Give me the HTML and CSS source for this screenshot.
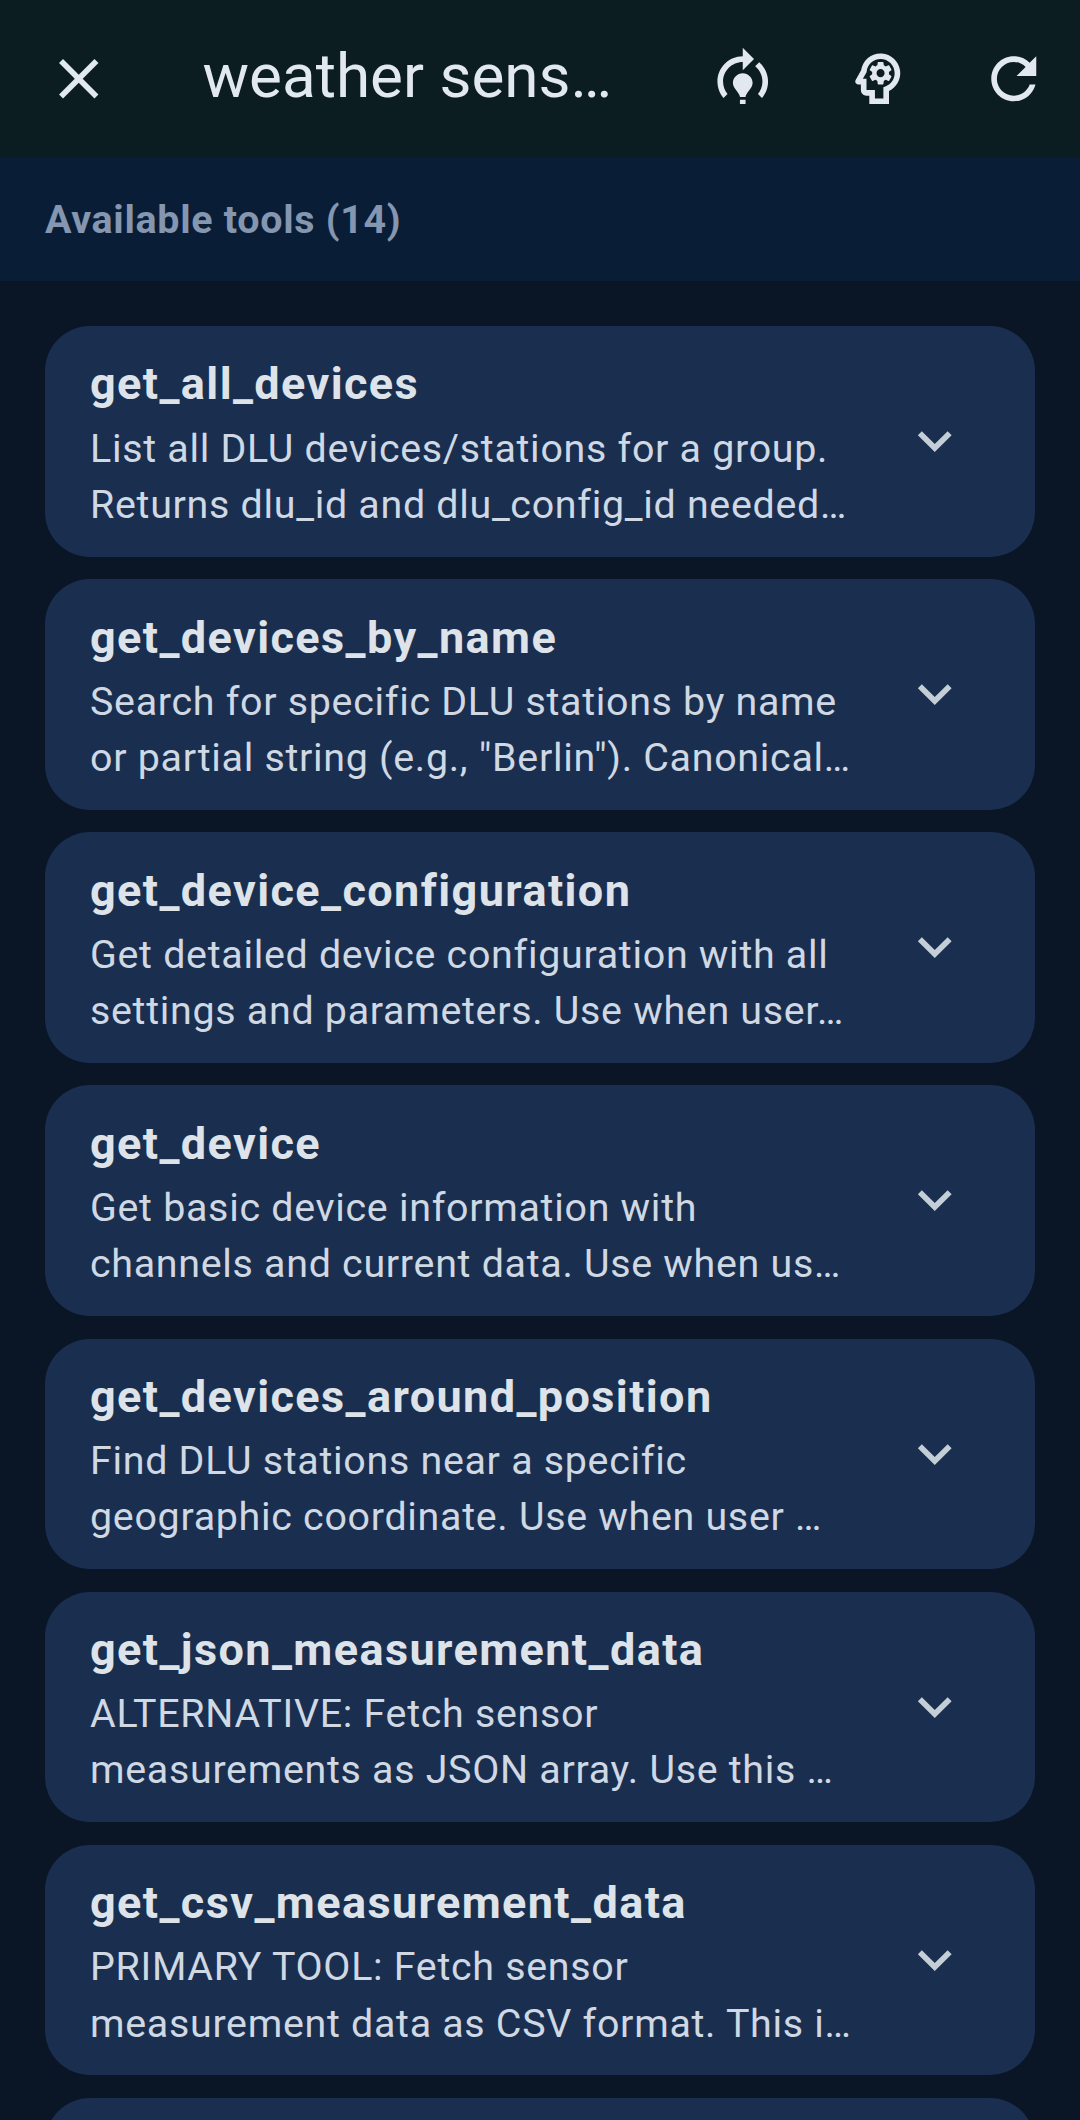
FILE: index.html
```html
<!DOCTYPE html>
<html lang="en">
<head>
    <meta charset="UTF-8">
    <meta name="viewport" content="width=device-width, initial-scale=1.0">
    <title>weather sensors</title>
    <link rel="stylesheet" href="styles.css">
</head>
<body>

    <!-- Top bar -->
    <header class="top-bar">
        <svg class="icon icon-close" viewBox="0 0 24 24"><path d="M19 6.41L17.59 5 12 10.59 6.41 5 5 6.41 10.59 12 5 17.59 6.41 19 12 13.41 17.59 19 19 17.59 13.41 12 19 6.41z"/></svg>
        <h1 class="top-title">weather sens…</h1>
        <div class="top-actions">
            <svg class="icon" viewBox="0 0 24 24"><path d="M15.5 13.5c0 2-2.5 3.5-2.5 5h-2c0-1.5-2.5-3-2.5-5 0-1.93 1.57-3.5 3.5-3.5s3.5 1.57 3.5 3.5zM13 19.5h-2V21h2v-1.5zM19 13c0 1.68-.59 3.21-1.58 4.42l1.42 1.42C20.18 17.27 21 15.23 21 13c0-2.74-1.23-5.19-3.16-6.84l-1.42 1.42C17.99 8.86 19 10.82 19 13zM16 5l-4-4v3c-4.97 0-9 4.03-9 9 0 2.23.82 4.27 2.16 5.84l1.42-1.42C5.59 16.21 5 14.68 5 13c0-3.86 3.14-7 7-7v3l4-4z"/></svg>
            <svg class="icon" viewBox="0 0 24 24"><path d="M15.82 7.22l-1 .4c-.21-.16-.43-.29-.67-.39L14 6.17c-.02-.1-.1-.17-.2-.17h-1.6c-.1 0-.18.07-.19.17l-.15 1.06c-.24.1-.47.23-.67.39l-1-.4c-.09-.03-.2 0-.24.09l-.8 1.38c-.05.09-.03.2.05.26l.85.66c-.03.12-.05.26-.05.39s.01.26.03.39l-.84.66c-.08.06-.1.17-.05.25l.8 1.39c.05.09.15.12.25.09l.99-.4c.21.16.43.29.68.39l.14 1.06c.02.1.1.17.2.17h1.6c.1 0 .18-.07.2-.17l.15-1.06c.24-.1.46-.23.67-.39l.99.4c.09.04.2 0 .24-.09l.8-1.39c.05-.09.03-.19-.05-.25l-.83-.66c.02-.13.02-.26.02-.39 0-.14-.01-.27-.03-.39l.85-.66c.08-.06.1-.17.05-.26l-.8-1.38c-.05-.09-.16-.12-.25-.09zM13 11.43c-.79 0-1.43-.64-1.43-1.43s.64-1.43 1.43-1.43 1.43.64 1.43 1.43-.64 1.43-1.43 1.43z"/><path d="M19.94 9.06c-.43-3.27-3.23-5.86-6.53-6.05C13.27 3 13.14 3 13 3 9.47 3 6.57 5.61 6.08 9l-1.93 3.48c-.41.66.07 1.52.85 1.52h1v2c0 1.1.9 2 2 2h1v3h7v-4.68c2.62-1.25 4.35-4.08 3.94-7.26zm-5.05 5.57l-.89.42V19h-3v-3H8v-4H6.7l1.33-2.33C8.21 7.06 10.35 5 13 5c2.76 0 5 2.24 5 5 0 2.09-1.29 3.88-3.11 4.63z"/></svg>
            <svg class="icon" viewBox="0 0 24 24"><path d="M17.65 6.35C16.2 4.9 14.21 4 12 4c-4.42 0-7.99 3.58-7.99 8s3.57 8 7.99 8c3.73 0 6.84-2.55 7.73-6h-2.08c-.82 2.33-3.04 4-5.65 4-3.31 0-6-2.69-6-6s2.69-6 6-6c1.66 0 3.14.69 4.22 1.78L13 11h7V4l-2.35 2.35z"/></svg>
        </div>
    </header>

    <!-- Tools header -->
    <div class="tools-header">Available tools (14)</div>

    <!-- Tool list -->
    <main class="tool-list">
        <div class="tool-card">
            <div class="tool-text">
                <div class="tool-name">get_all_devices</div>
                <div class="tool-desc">List all DLU devices/stations for a group.</div>
                <div class="tool-desc">Returns dlu_id and dlu_config_id needed…</div>
            </div>
            <svg class="chevron" viewBox="0 0 24 24"><path d="M16.59 8.59L12 13.17 7.41 8.59 6 10l6 6 6-6z"/></svg>
        </div>
        <div class="tool-card">
            <div class="tool-text">
                <div class="tool-name">get_devices_by_name</div>
                <div class="tool-desc">Search for specific DLU stations by name</div>
                <div class="tool-desc">or partial string (e.g., "Berlin"). Canonical…</div>
            </div>
            <svg class="chevron" viewBox="0 0 24 24"><path d="M16.59 8.59L12 13.17 7.41 8.59 6 10l6 6 6-6z"/></svg>
        </div>
        <div class="tool-card">
            <div class="tool-text">
                <div class="tool-name">get_device_configuration</div>
                <div class="tool-desc">Get detailed device configuration with all</div>
                <div class="tool-desc">settings and parameters. Use when user…</div>
            </div>
            <svg class="chevron" viewBox="0 0 24 24"><path d="M16.59 8.59L12 13.17 7.41 8.59 6 10l6 6 6-6z"/></svg>
        </div>
        <div class="tool-card">
            <div class="tool-text">
                <div class="tool-name">get_device</div>
                <div class="tool-desc">Get basic device information with</div>
                <div class="tool-desc">channels and current data. Use when us…</div>
            </div>
            <svg class="chevron" viewBox="0 0 24 24"><path d="M16.59 8.59L12 13.17 7.41 8.59 6 10l6 6 6-6z"/></svg>
        </div>
        <div class="tool-card">
            <div class="tool-text">
                <div class="tool-name">get_devices_around_position</div>
                <div class="tool-desc">Find DLU stations near a specific</div>
                <div class="tool-desc">geographic coordinate. Use when user …</div>
            </div>
            <svg class="chevron" viewBox="0 0 24 24"><path d="M16.59 8.59L12 13.17 7.41 8.59 6 10l6 6 6-6z"/></svg>
        </div>
        <div class="tool-card">
            <div class="tool-text">
                <div class="tool-name">get_json_measurement_data</div>
                <div class="tool-desc">ALTERNATIVE: Fetch sensor</div>
                <div class="tool-desc">measurements as JSON array. Use this …</div>
            </div>
            <svg class="chevron" viewBox="0 0 24 24"><path d="M16.59 8.59L12 13.17 7.41 8.59 6 10l6 6 6-6z"/></svg>
        </div>
        <div class="tool-card">
            <div class="tool-text">
                <div class="tool-name">get_csv_measurement_data</div>
                <div class="tool-desc">PRIMARY TOOL: Fetch sensor</div>
                <div class="tool-desc">measurement data as CSV format. This i…</div>
            </div>
            <svg class="chevron" viewBox="0 0 24 24"><path d="M16.59 8.59L12 13.17 7.41 8.59 6 10l6 6 6-6z"/></svg>
        </div>
        <!-- next card is cut off by the bottom of the screen -->
        <div class="tool-card"></div>
    </main>

</body>
</html>
```

FILE: styles.css
```css
* {
    margin: 0;
    padding: 0;
    box-sizing: border-box;
}

html, body {
    height: 2120px;
    overflow: hidden;
}

body {
    font-family: Roboto, "Noto Sans", sans-serif;
    background-color: #0a1526;
    color: #e2e8f0;
}

.top-bar {
    display: flex;
    align-items: center;
    height: 157px;
    padding-left: 45px;
    background-color: #0c1d22;
}

.icon {
    width: 67.5px;
    height: 67.5px;
    fill: #e2e8f0;
    flex-shrink: 0;
}

.icon-close {
    margin-right: 90px;
}

.top-title {
    flex: 1;
    font-size: 62px;
    font-weight: 400;
    line-height: 78px;
    padding-bottom: 5px;
    white-space: nowrap;
}

.top-actions {
    display: flex;
    align-items: center;
    gap: 68px;
    padding-right: 33px;
}

.tools-header {
    display: flex;
    align-items: center;
    height: 124px;
    padding-left: 45px;
    background-color: #0a1d36;
    color: #8596b0;
    font-size: 39.4px;
    font-weight: 700;
    letter-spacing: 0.7px;
}

.tool-list {
    display: flex;
    flex-direction: column;
    gap: 22.64px;
    padding: 45px 45px 0;
}

.tool-card {
    display: flex;
    align-items: center;
    flex-shrink: 0;
    height: 230.5px;
    padding: 0 67px 0 45px;
    background-color: #1a2f50;
    border-radius: 45px;
}

.tool-text {
    flex: 1;
    min-width: 0;
    padding-top: 1px;
}

.tool-name {
    font-size: 45px;
    font-weight: 700;
    letter-spacing: 1.4px;
    line-height: 67.5px;
    margin-bottom: 2.6px;
    color: #dde3e8;
}

.tool-desc {
    font-size: 39.4px;
    letter-spacing: 0.7px;
    line-height: 56.25px;
    white-space: nowrap;
    color: #cfd8e3;
}

.chevron {
    width: 67.5px;
    height: 67.5px;
    margin-bottom: 1px;
    fill: #c4ced6;
    flex-shrink: 0;
}
```
